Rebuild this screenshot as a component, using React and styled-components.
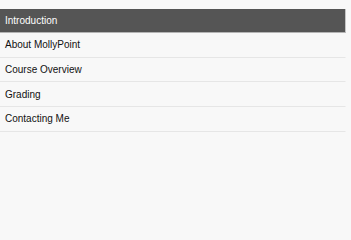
import React from "react";
import styled, { createGlobalStyle } from "styled-components";

const Global = createGlobalStyle`
  html, body {
    margin: 0;
    padding: 0;
    background: #f8f8f8;
  }
  body {
    font-family: "Liberation Sans", Arial, Helvetica, sans-serif;
  }
`;

const Page = styled.div`
  width: 351px;
  height: 210px;
  padding-top: 9px;
  box-sizing: border-box;
  background: #f8f8f8;
`;

const Menu = styled.ul`
  list-style: none;
  margin: 0;
  padding: 0;
  width: 346px;
`;

const Item = styled.li`
  display: flex;
  align-items: center;
  box-sizing: border-box;
  height: ${(p) => (p.$active ? "24px" : "24.7px")};
  padding-left: 5px;
  font-size: 10px;
  color: ${(p) => (p.$active ? "#ffffff" : "#111111")};
  background: ${(p) => (p.$active ? "#555555" : "transparent")};
  border-bottom: 1px solid ${(p) => (p.$active ? "#b4b4b4" : "#e6e6e6")};
  border-right: 1px solid ${(p) => (p.$active ? "#c4c4c4" : "transparent")};
`;

const items = ["Introduction", "About MollyPoint", "Course Overview", "Grading", "Contacting Me"];

export default function App() {
  return (
    <>
      <Global />
      <Page>
        <Menu>
          {items.map((t, i) => (
            <Item key={t} $active={i === 0}>
              {t}
            </Item>
          ))}
        </Menu>
      </Page>
    </>
  );
}
